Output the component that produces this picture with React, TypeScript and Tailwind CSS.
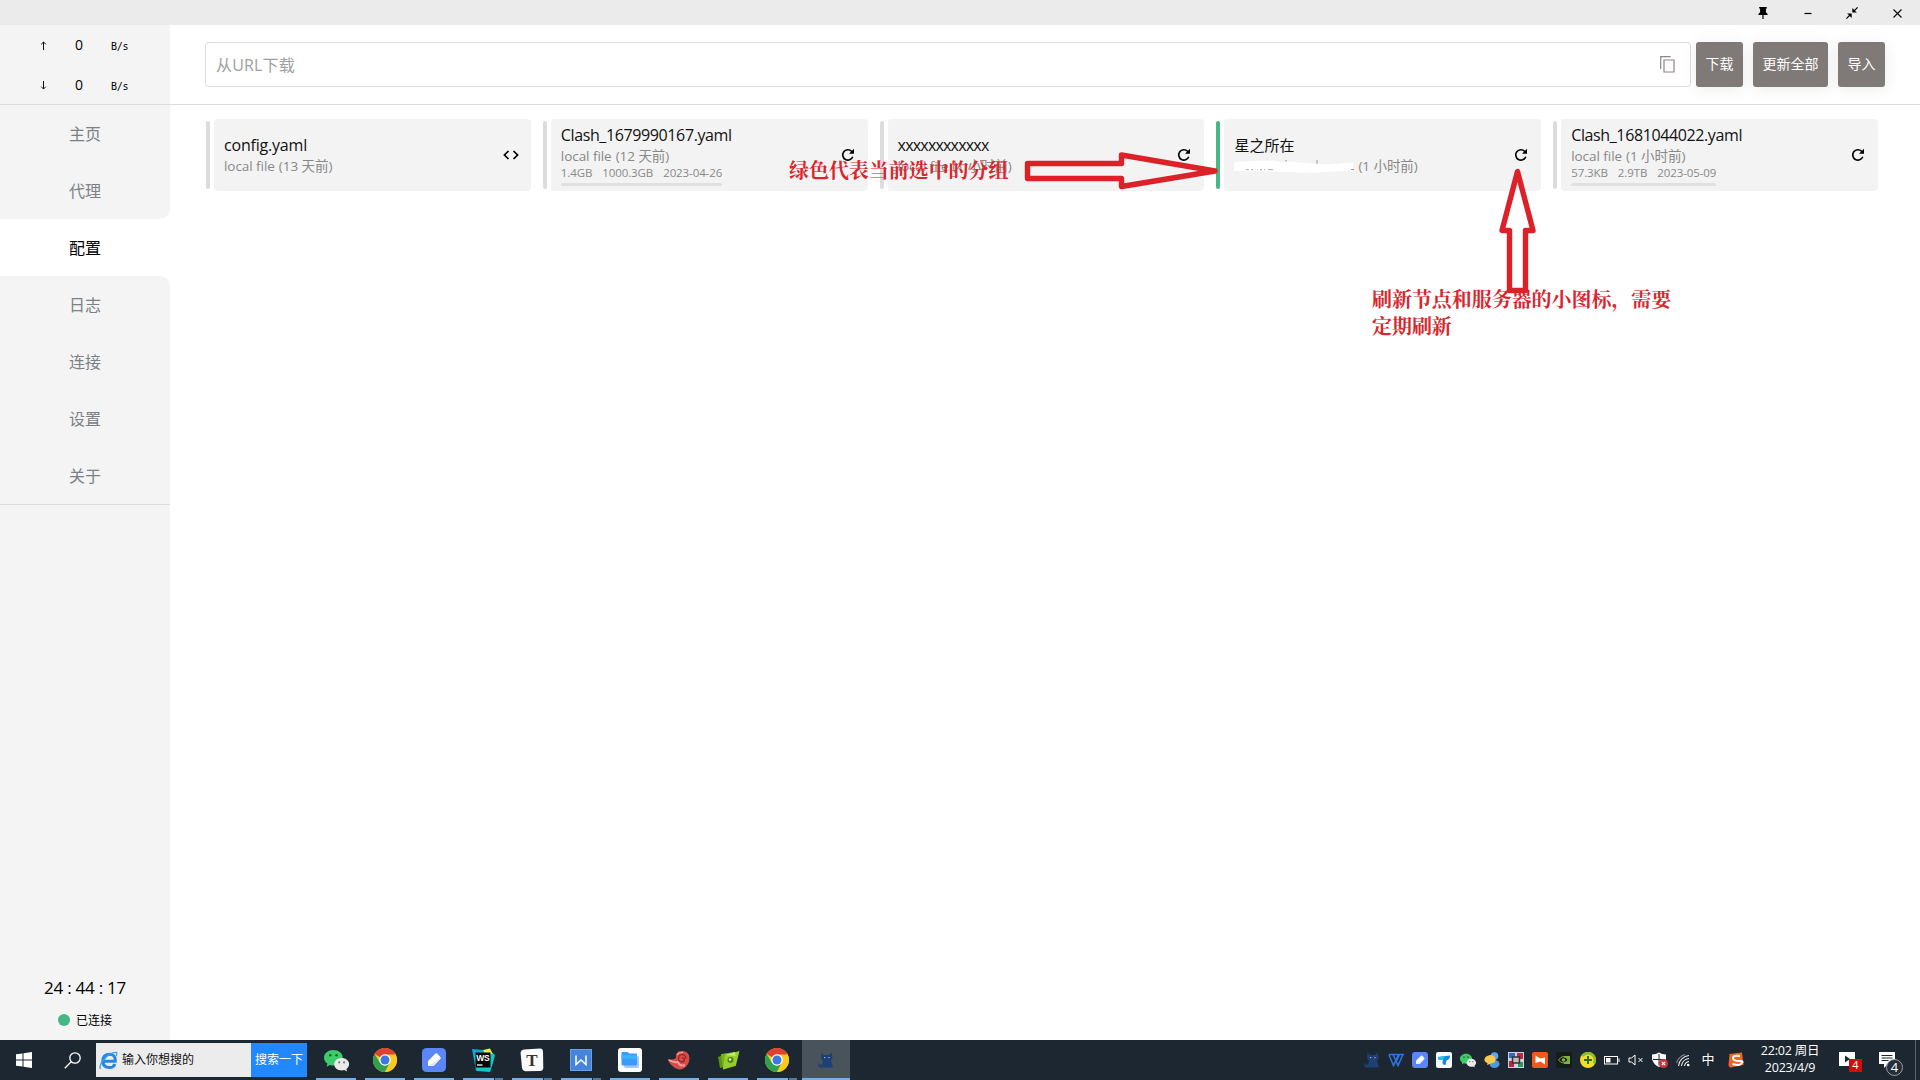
import React from "react";

const SANS = "font-['Open_Sans','Noto_Sans_CJK_SC',sans-serif]";

type Profile = {
  name: string;
  nameStyle: string;
  source: string;
  age: string;
  usage?: string[];
  icon: "code" | "refresh";
  active?: boolean;
  masked?: boolean;
};

const profiles: Profile[] = [
  { name: "config.yaml", nameStyle: "text-[16px] tracking-[-0.2px]", source: "local file", age: "(13 天前)", icon: "code" },
  { name: "Clash_1679990167.yaml", nameStyle: "text-[16px] tracking-[-0.38px]", source: "local file", age: "(12 天前)", usage: ["1.4GB", "1000.3GB", "2023-04-26"], icon: "refresh" },
  { name: "xxxxxxxxxxxx", nameStyle: "text-[16px] tracking-[-0.8px]", source: "local file", age: "(1 小时前)", icon: "refresh" },
  { name: "星之所在", nameStyle: "text-[15px]", source: "", age: "(1 小时前)", icon: "refresh", active: true, masked: true },
  { name: "Clash_1681044022.yaml", nameStyle: "text-[16px] tracking-[-0.38px]", source: "local file", age: "(1 小时前)", usage: ["57.3KB", "2.9TB", "2023-05-09"], icon: "refresh" },
];

const navTop = ["主页", "代理"];
const navBottom = ["日志", "连接", "设置", "关于"];

function RefreshIcon() {
  return (
    <svg width="14" height="14" viewBox="0 0 14 14" fill="none">
      <path d="M11.800 8.800A5.200 5.200 0 1 1 10.600 3.200L11.600 4.200" stroke="#000" strokeWidth="1.600" />
      <path d="M13 .800V5.800H8Z" fill="#000" />
    </svg>
  );
}

function CodeIcon() {
  return (
    <svg className="-mr-px" width="16" height="10" viewBox="0 0 16 10" fill="none" stroke="#000" strokeWidth="1.700">
      <path d="M5.500 1L1.400 5l4.100 4M10.500 1l4.100 4-4.100 4" />
    </svg>
  );
}

function TitleBar() {
  return (
    <header className="flex h-[25px] shrink-0 items-center justify-end bg-[#ebebeb] pt-px pr-[18px]">
      <svg className="mr-[36px]" width="10" height="12" viewBox="0 0 10 12">
        <path d="M1.200 0h7.600v1.400H7.900v3.900L9.600 7v1H5.600v4H4.400V8H.400V7l1.700-1.700V1.400h-.9z" fill="#000" />
      </svg>
      <svg className="mr-[34px]" width="8" height="12" viewBox="0 0 8 12">
        <path d="M.500 6.500h7" stroke="#000" strokeWidth="1.200" />
      </svg>
      <svg className="mr-[35px]" width="12" height="12" viewBox="0 0 12 12">
        <path d="M.400 11.600L4 8M11.600.400L8 4" stroke="#000" strokeWidth="1.200" />
        <path d="M1 6.400h4.700v4.700L4.200 9.500 3.400 8.600 2.600 7.800zM11 5.600H6.300V.900l1.500 1.600.8.900.8.800z" fill="#000" />
      </svg>
      <svg width="9" height="9" viewBox="0 0 9 9">
        <path d="M.500.500l8 8M8.500.500l-8 8" stroke="#111" strokeWidth="1.200" />
      </svg>
    </header>
  );
}

function Speed({ arrow }: { arrow: "up" | "down" }) {
  return (
    <div className="flex h-10 items-center text-black">
      <svg className="ml-[40px]" width="7" height="9" viewBox="0 0 7 9" fill="none" stroke="#111">
        <path d={arrow === "up" ? "M3.500 9V1M1.200 3.300L3.500 1l2.300 2.300" : "M3.500 0v8M1.200 5.700L3.500 8l2.300-2.300"} />
      </svg>
      <span className="w-[64px] pb-px text-center text-[14px]">0</span>
      <span className="pt-[2px] font-['DejaVu_Sans_Mono',monospace] text-[10px] tracking-[-0.3px]">B/s</span>
    </div>
  );
}

function NavItem({ label }: { label: string }) {
  return <div className="flex h-[57px] items-center justify-center pt-px text-[16px] text-[#7a8085]">{label}</div>;
}

function Sidebar() {
  return (
    <aside className="flex w-[170px] shrink-0 flex-col bg-[#f4f4f4]">
      <div className="h-20 border-b border-[#dcdcdc]">
        <Speed arrow="up" />
        <Speed arrow="down" />
      </div>
      <nav className="border-b border-[#dcdcdc] bg-white">
        <div className="rounded-br-[10px] bg-[#f4f4f4]">
          {navTop.map((n) => <NavItem key={n} label={n} />)}
        </div>
        <div className="flex h-[57px] items-center justify-center pt-px text-[16px] text-black">配置</div>
        <div className="rounded-tr-[10px] bg-[#f4f4f4]">
          {navBottom.map((n) => <NavItem key={n} label={n} />)}
        </div>
      </nav>
      <div className="mt-auto flex flex-col items-center text-black">
        <div className="text-[17px] leading-6 tracking-[-0.25px]">24 : 44 : 17</div>
        <div className="mt-3 mb-[10px] flex h-[18px] items-center gap-[6px] text-[12px]">
          <i className="mb-[2px] size-3 rounded-full bg-[#44b783]" />
          <span>已连接</span>
        </div>
      </div>
    </aside>
  );
}

function ToolButton({ label, wide }: { label: string; wide?: boolean }) {
  return (
    <button
      className={
        "flex h-[45px] items-center justify-center rounded-[3px] bg-[#7f7978] pb-px text-[14px] text-white shadow-[0_2px_16px_rgba(0,0,0,0.08)] " +
        (wide ? "w-[75px]" : "w-[47px]")
      }
    >
      {label}
    </button>
  );
}

function Toolbar() {
  return (
    <div className="flex h-20 items-center border-b border-[#dcdcdc] pb-[0.5px] pl-[35px]">
      <div className="flex h-[45px] w-[1486px] items-center justify-between rounded-[4px] border border-[#dcdcdc] pl-[10px] pr-[15px]">
        <span className="pt-px text-[16px] tracking-[0.15px] text-[#a0a0a0]">从URL下载</span>
        <svg width="15" height="17" viewBox="0 0 15 17" fill="none" stroke="#8c8585" strokeWidth="1.200">
          <path d="M.700 13V.700h10M4 4h10v12H4z" />
        </svg>
      </div>
      <div className="ml-[5px] flex gap-[10px]">
        <ToolButton label="下载" />
        <ToolButton label="更新全部" wide />
        <ToolButton label="导入" />
      </div>
    </div>
  );
}

function MaskedSource() {
  return (
    <svg width="120" height="18" viewBox="0 0 120 18">
      <path d="M52 3v4M83 3v4" stroke="#999" />
      <path d="M0 5l22-1 18-.500 5 1.500 12-.500 20 2 18 1 24-2v8l-20 1-24 1.500-22-1L8 14 0 14z" fill="#fff" />
      <path d="M12 12.700h3m2 0h2m4 0h1m2 0h2m2 0h1m3 0h5" stroke="#aaa" />
      <path d="M117 12.500h3" stroke="#999" />
    </svg>
  );
}

function ProfileCard({ p }: { p: Profile }) {
  return (
    <div className="flex h-[72px] min-w-0 items-center gap-1">
      <div className={"h-[68px] w-1 shrink-0 rounded-full " + (p.active ? "bg-[#47b784]" : "bg-[#dcdcdc]")} />
      <div className="flex h-full min-w-0 flex-1 items-center justify-between rounded-[4px] bg-[#f3f3f3] pr-[13px] pl-[10px]">
        <div className="flex flex-col items-start whitespace-nowrap">
          <div className={"h-[22px] leading-[22px] text-[#111] " + p.nameStyle}>{p.name}</div>
          <div className="flex h-[20px] items-center gap-1 text-[13.5px] leading-[20px] tracking-[-0.05px] text-[#888]">
            {p.masked ? <MaskedSource /> : <span>{p.source}</span>}
            <span>{p.age}</span>
          </div>
          {p.usage && (
            <div className="h-[21px]">
              <div className="flex h-[14px] gap-[10px] text-[11.5px] leading-[14px] tracking-[-0.1px] text-[#888]">
                {p.usage.map((u) => <span key={u}>{u}</span>)}
              </div>
              <div className="mt-[3px] h-[3px] w-full rounded-full bg-[#e0e0e0]" />
            </div>
          )}
        </div>
        {p.icon === "code" ? <CodeIcon /> : <RefreshIcon />}
      </div>
    </div>
  );
}

function Annotations() {
  return (
    <div className="pointer-events-none absolute inset-0 font-['Noto_Serif_CJK_SC','Noto_Sans_CJK_SC',serif] text-[20px] font-bold tracking-[-0.05px] text-[#d9262d]">
      <div className="absolute top-[156px] left-[789px] leading-[27px] whitespace-nowrap">绿色代表当前选中的分组</div>
      <svg className="absolute inset-0" width="1920" height="1040" fill="none" stroke="#dd2129" strokeWidth="5.400">
        <path strokeLinejoin="round" d="M1027.500 163.500H1121.500V155L1215 171L1121.500 186.500V178.500H1027.500Z" />
        <path strokeLinejoin="round" d="M1517.500 171.500L1502 230.500H1509.500V290.500H1525.500V230.500H1533Z" />
      </svg>
      <div className="absolute top-[285px] left-[1372px] w-[305px] leading-[27px]">刷新节点和服务器的小图标，需要<br />定期刷新</div>
    </div>
  );
}

function ChromeIcon() {
  return (
    <svg width="24" height="24" viewBox="0 0 24 24">
      <circle cx="12" cy="12" r="12" fill="#fbc91c" />
      <path d="M12 12L1.600 6A12 12 0 0 1 22.400 6Z" fill="#df4232" />
      <path d="M1.600 6A12 12 0 0 0 12 24L17 14.700 12 12 7 14.700Z" fill="#2fa052" />
      <path d="M12 6.500H22.600A12 12 0 0 1 12 24L17 14.500Z" fill="#fbc91c" />
      <circle cx="12" cy="12" r="5.800" fill="#fff" />
      <circle cx="12" cy="12" r="4.500" fill="#3b78e0" />
    </svg>
  );
}

function WeChatIcon({ size }: { size: number }) {
  return (
    <svg width={size} height={size} viewBox="0 0 24 24">
      <path d="M9 2C4 2 0 5.200 0 9.300c0 2.400 1.300 4.300 3.300 5.600L2.500 18l3.200-1.800c1 .300 2.100.500 3.300.500 5 0 9-3.300 9-7.400S14 2 9 2z" fill="#3ecb6b" />
      <circle cx="6" cy="7" r="1.200" fill="#19622f" /><circle cx="12" cy="7" r="1.200" fill="#19622f" />
      <path d="M17 9.500c-4 0-7.200 2.700-7.200 6s3.200 6 7.200 6c.9 0 1.800-.1 2.600-.4l2.600 1.400-.700-2.400c1.600-1.100 2.600-2.700 2.600-4.600 0-3.300-3.100-6-7.100-6z" fill="#e9e9e9" />
      <circle cx="14.600" cy="13.800" r="1" fill="#777" /><circle cx="19.300" cy="13.800" r="1" fill="#777" />
    </svg>
  );
}

function PenIcon({ size }: { size: number }) {
  return (
    <svg width={size} height={size} viewBox="0 0 24 24">
      <rect width="24" height="24" rx="4.500" fill="#5b86f7" />
      <path d="M6 18V13L13.500 5.500Q14.500 4.800 15.500 5.800L18.300 9Q19 10 18.200 11L11.500 18Z" fill="#fff" />
      <path d="M6 18L18.700 9.800Q18.900 10.400 18.200 11L11.500 18Z" fill="#dfe6fb" />
    </svg>
  );
}

function CatIcon({ size }: { size: number }) {
  return (
    <svg width={size} height={size} viewBox="0 0 16 16">
      <path d="M3.500 .5L6 3h5L13.800 .5 14.500 6.500 13 9 15 15.500H1.500Q-.500 13 .600 11.500 1.600 11 2 13L4.200 12 5 9 3 6.500Z" fill="#1f4074" />
      <circle cx="6.700" cy="5.600" r=".7" fill="#b9d2f5" /><circle cx="11" cy="5.600" r=".7" fill="#b9d2f5" />
    </svg>
  );
}

function WebStormIcon() {
  return (
    <svg width="24" height="24" viewBox="0 0 24 24">
      <path d="M1 1l11 1 2 20-9 1z" fill="#12a7d8" />
      <path d="M3 8l3 15 13 1 3-9 2-8-7-6z" fill="#15c6c4" />
      <path d="M12 2l7-1.500 2.500 5L15 8z" fill="#e9f14d" />
      <rect x="4.500" y="4.500" width="15" height="15" fill="#050505" />
      <text x="5.200" y="12.500" fontSize="8.500" fontWeight="700" fill="#fff" fontFamily="Liberation Sans, sans-serif" textLength="13.500">WS</text>
      <path d="M6 17h5.500" stroke="#fff" strokeWidth="1.300" />
    </svg>
  );
}

function TyporaIcon() {
  return (
    <svg width="24" height="24" viewBox="0 0 24 24">
      <path d="M4 1.500L20 .600Q23 .600 23 4L23.300 20Q23 23 20 23L5 23.300Q2.500 23 2 20L.600 5Q.600 2 4 1.500z" fill="#fafafa" />
      <text x="12" y="17.500" textAnchor="middle" fontSize="17" fontWeight="700" fill="#333" fontFamily="Liberation Serif, serif">T</text>
    </svg>
  );
}

function WpsIcon() {
  return (
    <svg width="22" height="22" viewBox="0 0 22 22">
      <rect x=".5" y=".5" width="21" height="21" fill="#4584dc" stroke="#6b9fe6" />
      <path d="M6 6.500V15.500L11 11l5 4.500V6.500" fill="none" stroke="#fff" strokeWidth="1.500" />
    </svg>
  );
}

function FolderIcon() {
  return (
    <svg width="24" height="24" viewBox="0 0 24 24">
      <rect width="24" height="24" rx="3" fill="#fdfdfe" />
      <rect x="6" y="8" width="15" height="12" rx="2" fill="#a9c4ff" />
      <path d="M3.500 5q0-1 1-1h5l2 1.500h6.500q1 0 1 1V16q0 1.500-1.500 1.500H5Q3.500 17.500 3.500 16z" fill="#3a9cf8" />
      <path d="M3.500 7H19v4H3.500z" fill="#3cb2f9" />
    </svg>
  );
}

function ShellIcon() {
  return (
    <svg width="24" height="20" viewBox="0 0 24 20">
      <path d="M.500 9Q5 11 9 8 8 1 15 1q7 0 7.500 7 0 7-6 10.500Q12 20.500 8 18 3 15 .500 9z" fill="#d84b48" />
      <path d="M2 10q5 3 9 2 2 5 7 3" fill="none" stroke="#f4a09a" strokeWidth="2" />
      <path d="M10 5Q12 2 16 2.500" fill="none" stroke="#f4a09a" strokeWidth="1.300" />
      <path d="M19 8.500q-.500-4-4-4-3.500.500-3.500 4t3.500 3.500q2.500-.500 2.300-2.700-.500-1.800-2.300-1.300" fill="none" stroke="#8c2426" strokeWidth="1.200" />
    </svg>
  );
}

function GreenFoldIcon() {
  return (
    <svg width="23" height="20" viewBox="0 0 23 20">
      <path d="M1 7L6 5l1 12-4 1z" fill="#5b9412" />
      <path d="M4 4l14-2 1 14-13 3.500z" fill="#78b51c" />
      <path d="M8 5L22.500 1 19 15 6 19.500z" fill="#96cf2b" />
      <path d="M8 5L18 2l.5 4z" fill="#c1e96a" />
      <circle cx="13.500" cy="10" r="3" fill="#4f8510" /><circle cx="13" cy="9.500" r="1.200" fill="#e7f7c4" />
    </svg>
  );
}

type Task = { icon: React.ReactNode; stacked?: boolean; active?: boolean };
const tasks: Task[] = [
  { icon: <WeChatIcon size={25} /> },
  { icon: <ChromeIcon /> },
  { icon: <PenIcon size={24} /> },
  { icon: <WebStormIcon />, stacked: true },
  { icon: <TyporaIcon />, stacked: true },
  { icon: <WpsIcon />, stacked: true },
  { icon: <FolderIcon /> },
  { icon: <ShellIcon /> },
  { icon: <GreenFoldIcon /> },
  { icon: <ChromeIcon />, stacked: true },
  { icon: <CatIcon size={16} />, active: true },
];

function TaskButton({ t }: { t: Task }) {
  return (
    <div className={"flex h-10 w-[48px] shrink-0 flex-col items-center " + (t.active ? "bg-[#49535b]" : "")}>
      <div className="flex h-[38px] items-center pt-[2px]">{t.icon}</div>
      <div className={"flex h-[2px] " + (t.active ? "w-[48px]" : "w-10")}>
        <div className="flex-1 bg-[#76b0e4]" />
        {t.stacked && <div className="w-[9px] border-l border-[#1c2731] bg-[#54799a]" />}
      </div>
    </div>
  );
}

const trayIcons: React.ReactNode[] = [
  <CatIcon size={16} />,
  <svg width="16" height="14" viewBox="0 0 16 14" fill="none" stroke="#2f73de" strokeWidth="1.600"><path d="M.800 1.500h9.700L5.500 12.500 1 2M5 1.500l5 11L15 1.500h-3.500L8 9" /></svg>,
  <PenIcon size={16} />,
  <svg width="16" height="16" viewBox="0 0 16 16"><rect width="16" height="16" rx="2" fill="#f7fbff" /><path d="M2 5L14 3.500q0 4-3.500 5L9.500 13Q6 13 6.500 9.500L7 8H3Q2 7 2 5z" fill="#1688ea" /><path d="M2 5l7-.8L7 8H3Q2 7 2 5z" fill="#23c3e8" /></svg>,
  <WeChatIcon size={17} />,
  <svg width="16" height="16" viewBox="0 0 16 16"><circle cx="10.500" cy="4" r="3.800" fill="#5aa9e6" /><ellipse cx="10.500" cy="12" rx="5" ry="4" fill="#4b9bdc" /><path d="M6 3q5 0 5.500 4T7 11.500L3 13l.500-2Q0 10 .500 7T6 3z" fill="#f8c84c" /></svg>,
  <svg width="16" height="16" viewBox="0 0 16 16"><rect width="16" height="16" fill="#c9d5e4" /><path d="M1 1h6v5H1z" fill="#3967bd" /><path d="M9 1h6v6H9z" fill="#c6273a" /><path d="M1 9h5v6H1z" fill="#b72743" /><path d="M10 10h5v5h-5z" fill="#2e9b5c" /><path d="M4.500 5h7v6h-7z" fill="#c9b8b8" stroke="#333" strokeWidth="1.500" /></svg>,
  <svg width="16" height="16" viewBox="0 0 16 16"><rect width="16" height="16" rx="2" fill="#ef5a1c" /><path d="M3.500 3.500L8 6.500l5-1v7L8.500 9.500 3.500 11z" fill="#fff" /></svg>,
  <svg width="16" height="16" viewBox="0 0 16 16"><rect width="16" height="16" fill="#151b17" /><path d="M2.500 8Q6 3 10 5.500L12 8Q8 12.500 4.500 10z" fill="none" stroke="#7fb342" /><circle cx="7.500" cy="8" r="1.800" fill="#7fb342" /><path d="M8 4h6v8H8v-1.200q3-.600 4.500-2.800Q10.500 5.500 8 5.200z" fill="#7fb342" /></svg>,
  <svg width="16" height="16" viewBox="0 0 16 16"><circle cx="8" cy="8" r="8" fill="#f4dd25" /><path d="M8 0A8 8 0 0 1 15 12L8 8 1.500 3.500A8 8 0 0 1 8 0" fill="#85bd2c" /><circle cx="8" cy="8" r="5.600" fill="#f4dd25" /><path d="M8 4v8M4 8h8" stroke="#26701f" strokeWidth="2" /></svg>,
  <svg width="16" height="16" viewBox="0 0 16 16" fill="none" stroke="#fff"><rect x=".500" y="4.500" width="13" height="7.500" /><path d="M15 6.500v3.500" /><path d="M2 6h4.500v4.500H2z" fill="#fff" stroke="none" /></svg>,
  <svg width="16" height="16" viewBox="0 0 16 16" fill="none" stroke="#fff"><path d="M1 6h2.500L7 3v10L3.500 10H1zM10.500 6l4 4M14.500 6l-4 4" /></svg>,
  <svg width="16" height="16" viewBox="0 0 16 16"><path d="M7 .500Q10 2.500 14 2.500V7Q13 12 7 15 1 12 0 7V2.500Q4 2.500 7 .500z" fill="#fff" /><path d="M7 2v11.500M1 7.500h12" stroke="#1c2731" /><circle cx="11.500" cy="11.500" r="4.500" fill="#d6303a" /><path d="M9.800 9.800l3.400 3.400M13.200 9.800l-3.400 3.400" stroke="#fff" strokeWidth="1.200" /></svg>,
  <svg width="16" height="16" viewBox="0 0 16 16" fill="none" stroke="#e6e9eb" strokeWidth="1.100"><path d="M2.500 14A11.500 11.500 0 0 1 13 3.500M5.500 14A8.500 8.500 0 0 1 13 6.500M8.500 14A5.500 5.500 0 0 1 13 9.500" /><path d="M.500 11A13 13 0 0 1 9 2.500" stroke="#7d858b" /><circle cx="12.200" cy="13" r="1.300" fill="#fff" stroke="none" /></svg>,
];

function Taskbar() {
  return (
    <footer className="flex h-10 shrink-0 items-center bg-[#1c2731] text-white">
      <div className="flex w-12 justify-center">
        <svg width="16" height="16" viewBox="0 0 16 16" fill="#fff"><path d="M0 2.300L6.500 1.400V7.500H0zM7.500 1.200L16 0v7.500H7.500zM0 8.500h6.500v6.100L0 13.700zM7.500 8.500H16V16l-8.500-1.200z" /></svg>
      </div>
      <div className="flex w-12 justify-center">
        <svg width="17" height="17" viewBox="0 0 17 17" fill="none" stroke="#fff" strokeWidth="1.300"><circle cx="11" cy="6" r="5.200" /><path d="M7.200 9.800L.800 16.200" /></svg>
      </div>
      <div className="flex h-[34px] w-[211px] items-center bg-[#ececec]">
        <svg className="ml-[3px]" width="19" height="19" viewBox="0 0 19 19" fill="none">
          <path d="M4.500 10.300H16.300Q16.800 3.500 10.400 3.300 3.800 3.700 3.800 10.300 4 16.500 10.300 16.600 14.500 16.600 16 13" stroke="#2387e6" strokeWidth="3" />
          <path d="M1.500 18Q-.500 15 5 8.500 12 .500 17.500 1.500 18.500 2.500 17 5" stroke="#32a4ef" strokeWidth="1.300" />
        </svg>
        <span className="ml-[4px] flex-1 text-[12px] text-[#111]">输入你想搜的</span>
        <span className="flex h-full w-[56px] items-center justify-center bg-[#2288ff] text-[12px] text-white">搜索一下</span>
      </div>
      <div className="ml-[5px] flex gap-px">
        {tasks.map((t, i) => <TaskButton key={i} t={t} />)}
      </div>
      <div className="ml-auto flex h-full items-center">
        <div className="flex gap-2">
          {trayIcons.map((ic, i) => <div key={i} className="flex size-4 items-center justify-center">{ic}</div>)}
        </div>
        <span className="ml-[8px] w-4 text-center text-[13px]">中</span>
        <svg className="ml-[12px]" width="16" height="16" viewBox="0 0 16 16"><path d="M1.500 2L14 .500 15.500 13 3 15.500Q.500 15.500.500 13z" fill="#ed6328" /><path d="M12 4Q5 3 5 6t6.500 3-.500 4Q7.500 13 4.500 12" fill="none" stroke="#fff" strokeWidth="2" /></svg>
        <div className="ml-[10px] w-[72px] pb-[3px] text-center text-[12.5px] leading-[17px] tracking-[-0.2px] whitespace-nowrap">
          <div>22:02 周日</div>
          <div>2023/4/9</div>
        </div>
        <div className="relative ml-[13px] h-4 w-6">
          <svg className="absolute top-0 left-0" width="16" height="14" viewBox="0 0 16 14"><path d="M0 0h16v14H0z" fill="#fff" /><path d="M6 3.500v7l5-3.500z" fill="#1c2731" /></svg>
          <span className="absolute top-[7px] left-[10px] flex h-[13px] w-[13px] items-center justify-center bg-[#d60c0c] text-[11px]">4</span>
        </div>
        <div className="relative mr-[12px] ml-[16px] h-4 w-6">
          <svg className="absolute top-0 left-0" width="16" height="16" viewBox="0 0 16 16"><path d="M0 0h16v12H9l-4 4v-4H0z" fill="#fff" /><path d="M2.500 3.500h11M2.500 6h11M2.500 8.500h7" stroke="#1c2731" /></svg>
          <span className="absolute top-[7px] left-[7px] flex size-[17px] items-center justify-center rounded-full border border-[#9aa1a7] bg-[#252e37] text-[13px]">4</span>
        </div>
        <div className="mr-1 h-10 w-px bg-[#5c656d]" />
      </div>
    </footer>
  );
}

export default function App() {
  return (
    <div lang="zh-CN" className={"relative flex h-[1080px] w-[1920px] flex-col overflow-hidden bg-white " + SANS}>
      <TitleBar />
      <div className="flex min-h-0 flex-1">
        <Sidebar />
        <main className="flex flex-1 flex-col">
          <Toolbar />
          <div className="grid grid-cols-5 gap-3 pt-[14px] pr-[42px] pl-[36px]">
            {profiles.map((p) => <ProfileCard key={p.name} p={p} />)}
          </div>
        </main>
      </div>
      <Taskbar />
      <Annotations />
    </div>
  );
}
